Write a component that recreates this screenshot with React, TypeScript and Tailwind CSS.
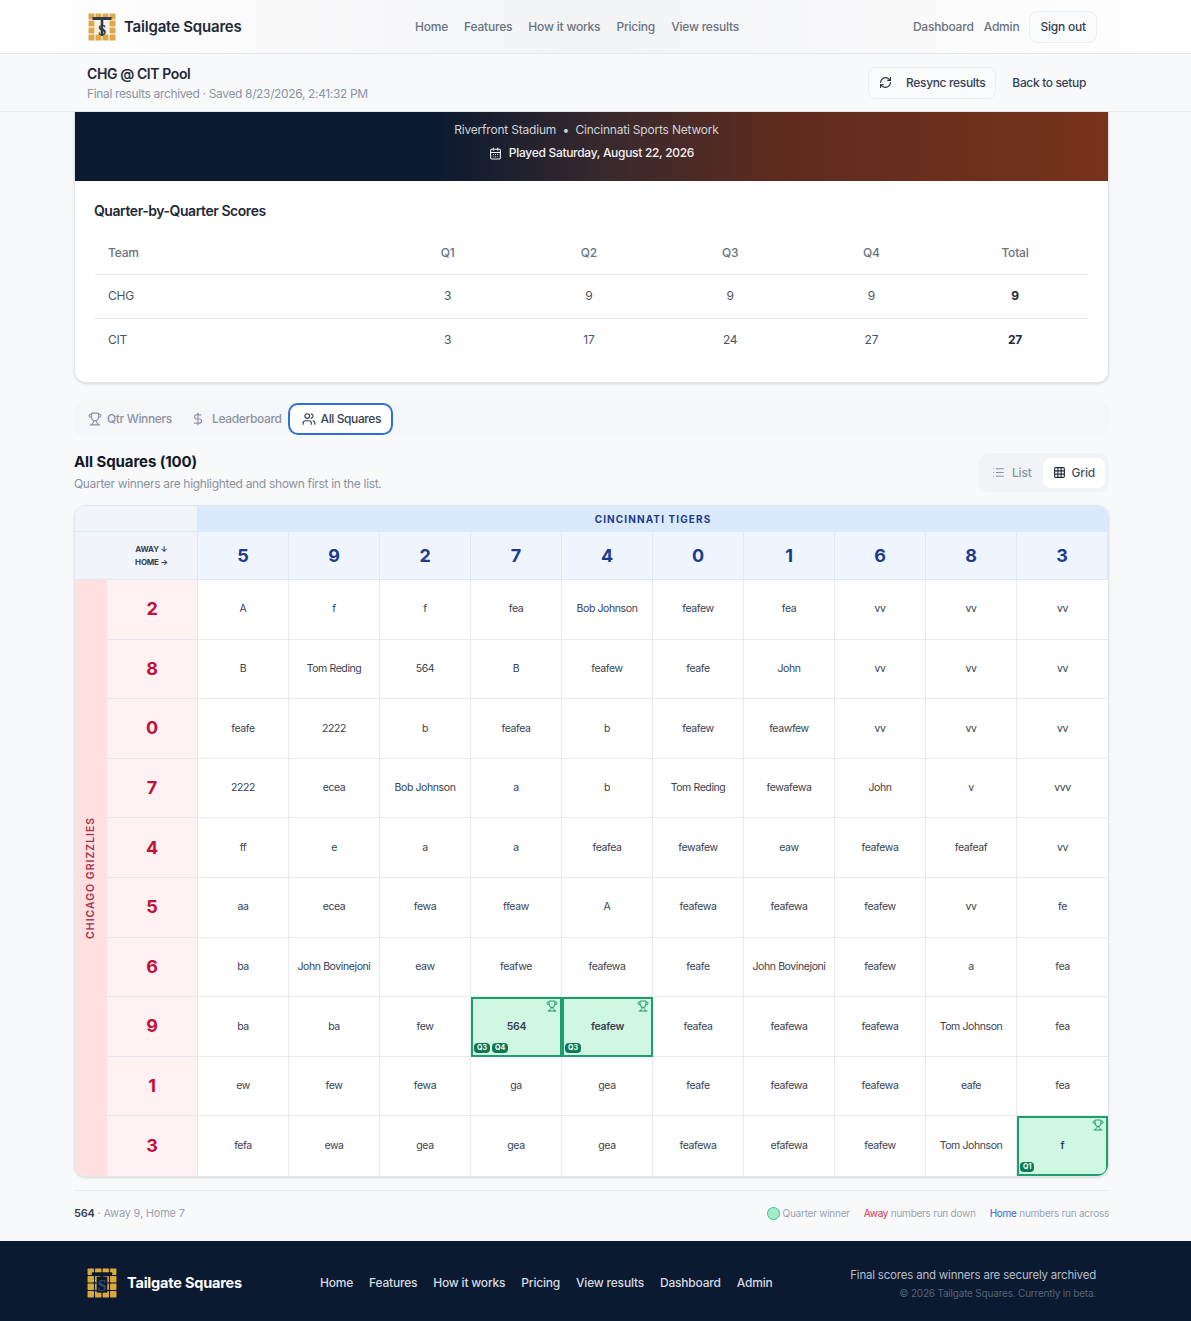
import React from 'react';
import { CalendarDays, DollarSign, Grid3x3, List, RefreshCw, Trophy, Users } from 'lucide-react';

const homeNumbers = [5, 9, 2, 7, 4, 0, 1, 6, 8, 3];

type Square = { name: string; quarters?: string[] };

const w = (name: string, ...quarters: string[]): Square => ({ name, quarters });

const board: { away: number; squares: (string | Square)[] }[] = [
  { away: 2, squares: ['A', 'f', 'f', 'fea', 'Bob Johnson', 'feafew', 'fea', 'vv', 'vv', 'vv'] },
  { away: 8, squares: ['B', 'Tom Reding', '564', 'B', 'feafew', 'feafe', 'John', 'vv', 'vv', 'vv'] },
  { away: 0, squares: ['feafe', '2222', 'b', 'feafea', 'b', 'feafew', 'feawfew', 'vv', 'vv', 'vv'] },
  { away: 7, squares: ['2222', 'ecea', 'Bob Johnson', 'a', 'b', 'Tom Reding', 'fewafewa', 'John', 'v', 'vvv'] },
  { away: 4, squares: ['ff', 'e', 'a', 'a', 'feafea', 'fewafew', 'eaw', 'feafewa', 'feafeaf', 'vv'] },
  { away: 5, squares: ['aa', 'ecea', 'fewa', 'ffeaw', 'A', 'feafewa', 'feafewa', 'feafew', 'vv', 'fe'] },
  { away: 6, squares: ['ba', 'John Bovinejoni', 'eaw', 'feafwe', 'feafewa', 'feafe', 'John Bovinejoni', 'feafew', 'a', 'fea'] },
  { away: 9, squares: ['ba', 'ba', 'few', w('564', 'Q3', 'Q4'), w('feafew', 'Q3'), 'feafea', 'feafewa', 'feafewa', 'Tom Johnson', 'fea'] },
  { away: 1, squares: ['ew', 'few', 'fewa', 'ga', 'gea', 'feafe', 'feafewa', 'feafewa', 'eafe', 'fea'] },
  { away: 3, squares: ['fefa', 'ewa', 'gea', 'gea', 'gea', 'feafewa', 'efafewa', 'feafew', 'Tom Johnson', w('f', 'Q1')] },
];

const scores = [
  { team: 'CHG', q: [3, 9, 9, 9], total: 9 },
  { team: 'CIT', q: [3, 17, 24, 27], total: 27 },
];

const navLinks = ['Home', 'Features', 'How it works', 'Pricing', 'View results'];
const footerLinks = [...navLinks, 'Dashboard', 'Admin'];

// gold tile grid with the T and S monogram on top
const Logo = ({ dark, size }: { dark?: boolean; size: number }) => {
  const tiles = [];
  for (let r = 0; r < 4; r++) {
    for (let c = 0; c < 4; c++) {
      tiles.push(<rect key={`${r}-${c}`} x={c * 7 + 0.5} y={r * 7 + 0.5} width="6" height="6" rx="0.6" fill={dark ? '#d9a93c' : '#dba94a'} />);
    }
  }
  const ink = dark ? '#0b1a30' : '#333a46';
  return (
    <svg width={size} height={size} viewBox="0 0 28 28" className="shrink-0">
      {tiles}
      {!dark && <rect x="7" y="7" width="14" height="14" fill="#f6f2e6" />}
      {dark && <rect x="9" y="8" width="10" height="15" fill="#0b1a30" />}
      <rect x="4.5" y="4" width="19" height="3" fill={ink} />
      <rect x="12.7" y="6" width="2.6" height="17" fill={ink} />
      <text x="14" y="21.5" textAnchor="middle" fontSize="15" fontFamily="'Liberation Serif', serif" fontWeight="700" fill={dark ? '#2f4a73' : '#333a46'}>S</text>
    </svg>
  );
};

const WinnerCell = ({ square, corner }: { square: Square; corner?: boolean }) => (
  <div className={`relative flex items-center justify-center border-2 border-[#1f9d6f] bg-[#cff7e1] text-[10.5px] font-semibold tracking-[-0.3px] text-[#374151] ${corner ? 'rounded-br-lg' : ''}`}>
    <Trophy size={12} strokeWidth={2} className="absolute right-[2px] top-[1px] text-[#1f9d6f]" />
    {square.name}
    <div className="absolute bottom-[2px] left-[1px] flex gap-[2px]">
      {square.quarters?.map((q) => (
        <span key={q} className="rounded-[4px] bg-[#0b7a52] px-[3px] text-[7px] font-bold leading-[10px] tracking-normal text-white">{q}</span>
      ))}
    </div>
  </div>
);

const SquaresGrid = () => (
  <div className="grid grid-cols-[32px_91px_repeat(10,minmax(0,1fr))] grid-rows-[26px_48px_repeat(10,minmax(0,1fr))] h-[672px] overflow-hidden rounded-xl border border-[#e2e6ec] bg-white shadow-sm">
    <div className="col-span-2 border-b border-r border-[#e2e8f0] bg-[#f1f4f8]" />
    <div className="col-span-10 flex items-center justify-center bg-[#dbe9fd] text-[10px] font-bold tracking-[1.1px] text-[#1e3a8a]">CINCINNATI TIGERS</div>

    <div className="col-span-2 flex flex-col items-center justify-center border-b border-r border-[#e2e8f0] bg-[#f1f4f8] pl-[31px] text-[8px] font-bold leading-[13px] text-[#374151]">
      <span>AWAY ↓</span>
      <span>HOME →</span>
    </div>
    {homeNumbers.map((n) => (
      <div key={n} className="flex items-center justify-center border-b border-r border-[#e2e8f0] bg-[#eef5fe] text-lg font-bold text-[#1e3a8a] last:border-r-0">{n}</div>
    ))}

    <div className="row-span-10 flex items-center justify-center bg-[#ffdfe0]">
      <span className="-rotate-90 whitespace-nowrap text-[10.5px] font-semibold tracking-[1px] text-[#a8324a]">CHICAGO GRIZZLIES</span>
    </div>
    {board.map((row, r) => (
      <React.Fragment key={row.away}>
        <div className={`flex items-center justify-center border-r border-[#e5e7eb] bg-[#fff0f1] text-lg font-bold text-[#be123c] ${r < 9 ? 'border-b' : ''}`}>{row.away}</div>
        {row.squares.map((square, c) =>
          typeof square === 'string' ? (
            <div key={c} className={`flex items-center justify-center whitespace-nowrap border-[#e8eaee] text-[10.5px] tracking-[-0.4px] text-[#374151] ${r < 9 ? 'border-b' : ''} ${c < 9 ? 'border-r' : ''}`}>{square}</div>
          ) : (
            <WinnerCell key={c} square={square} corner={r === 9 && c === 9} />
          ),
        )}
      </React.Fragment>
    ))}
  </div>
);

export default function App() {
  return (
    <div className="min-h-[1321px] bg-[#f8f9fb] font-['Inter',sans-serif] tracking-[-0.2px] text-[#1f2937]">
      <header className="flex h-[54px] items-center justify-between border-b border-[#e5e7eb] bg-gradient-to-r from-white via-[#f2f3f5] to-white pl-[88px] pr-[94px]">
        <div className="flex w-[327px] items-center gap-2">
          <Logo size={28} />
          <span className="mt-[2px] text-[15px] font-semibold text-[#1f2937]">Tailgate Squares</span>
        </div>
        <nav className="flex gap-4 text-xs font-medium text-[#6b7280]">
          {navLinks.map((l) => <span key={l}>{l}</span>)}
        </nav>
        <div className="ml-auto flex items-center gap-[10px] text-xs font-medium text-[#6b7280]">
          <span>Dashboard</span>
          <span>Admin</span>
          <span className="rounded-lg border border-[#eceef1] bg-[#f9fafb] px-[10px] py-[7px] text-[#374151]">Sign out</span>
        </div>
      </header>

      <div className="flex h-[58px] items-center justify-between border-b border-[#e8eaee] bg-[#f8f9fb] pl-[87px] pr-[105px]">
        <div>
          <div className="text-sm font-semibold leading-5 tracking-[-0.4px] text-[#1f2937]">CHG @ CIT Pool</div>
          <div className="mt-[2px] text-xs leading-4 tracking-[-0.35px] text-[#8b93a1]">Final results archived · Saved 8/23/2026, 2:41:32 PM</div>
        </div>
        <div className="flex items-center gap-4 text-xs font-medium tracking-[-0.35px] text-[#374151]">
          <span className="flex items-center gap-[14px] rounded-lg border border-[#eceef1] bg-[#f9fafb] px-[10px] py-[7px]">
            <RefreshCw size={13} className="text-[#1f2937]" />
            Resync results
          </span>
          <span>Back to setup</span>
        </div>
      </div>

      <main className="pl-[74px] pr-[82px]">
        <section className="overflow-hidden rounded-b-xl border border-t-0 border-[#e2e5ea] bg-white shadow-sm">
          <div className="flex h-[69px] flex-col items-center justify-center gap-[7px] bg-[linear-gradient(90deg,#0b1a30_35%,#3a292d_52%,#5e2b1f_68%,#78331b_100%)] pb-[10px] text-xs">
            <div className="pr-[10px] text-[#cfd3d8]">Riverfront Stadium&nbsp; •&nbsp; Cincinnati Sports Network</div>
            <div className="flex items-center gap-[7px] font-medium tracking-[-0.3px] text-[#f1f2f4]">
              <CalendarDays size={13} />
              Played Saturday, August 22, 2026
            </div>
          </div>
          <div className="h-[201px] px-5 pt-5">
            <h2 className="-ml-[1px] text-sm font-semibold leading-5 tracking-[-0.45px] text-[#1f2937]">Quarter-by-Quarter Scores</h2>
            <table className="mt-3 w-full table-fixed text-xs text-[#4b5563]">
              <thead>
                <tr className="h-[41px] border-b border-[#e5e7eb] text-[#6b7280]">
                  <th className="w-[282px] pl-[13px] text-left font-medium">Team</th>
                  <th className="font-medium">Q1</th>
                  <th className="font-medium">Q2</th>
                  <th className="font-medium">Q3</th>
                  <th className="font-medium">Q4</th>
                  <th className="w-[146px] font-medium">Total</th>
                </tr>
              </thead>
              <tbody>
                {scores.map((s, i) => (
                  <tr key={s.team} className={`h-[44px] ${i === 0 ? 'border-b border-[#e5e7eb]' : ''}`}>
                    <td className="pl-[13px]">{s.team}</td>
                    {s.q.map((v, j) => <td key={j} className="text-center">{v}</td>)}
                    <td className="text-center font-bold text-[#1f2937]">{s.total}</td>
                  </tr>
                ))}
              </tbody>
            </table>
          </div>
        </section>

        <div className="mt-5 flex h-8 items-center rounded-lg bg-[#f4f6f9] pl-[14px] text-xs font-medium tracking-[-0.35px] text-[#8b93a1]">
          <span className="flex items-center gap-[5px]"><Trophy size={14} />Qtr Winners</span>
          <span className="ml-[19px] flex items-center gap-[7px]"><DollarSign size={14} />Leaderboard</span>
          <span className="ml-[6px] flex h-8 items-center gap-[5px] rounded-[10px] border-2 border-[#2f6fd6] bg-white pl-3 pr-[10px] tracking-[-0.4px] text-[#374151]"><Users size={14} />All Squares</span>
        </div>

        <div className="mt-4 flex items-start justify-between">
          <div className="pt-[1px]">
            <h3 className="text-[15px] font-bold leading-5 tracking-[-0.1px] text-[#111827]">All Squares (100)</h3>
            <p className="mt-1 text-xs leading-4 tracking-[-0.33px] text-[#8b93a1]">Quarter winners are highlighted and shown first in the list.</p>
          </div>
          <div className="mt-[2px] flex h-[39px] items-center rounded-[10px] bg-[#f1f3f6] p-1 text-xs font-medium">
            <span className="flex items-center gap-[7px] pl-[9px] pr-[11px] text-[#8b93a1]"><List size={13} />List</span>
            <span className="flex h-[30px] items-center gap-[6px] rounded-lg bg-white px-[10px] text-[#4b5563]"><Grid3x3 size={13} className="text-[#1f2937]" />Grid</span>
          </div>
        </div>

        <div className="mt-[13px]">
          <SquaresGrid />
        </div>

        <div className="mt-[13px] flex h-[45px] items-center justify-between border-t border-[#e8eaee] text-[#9aa2ae]">
          <div className="text-[11px]"><span className="font-semibold text-[#374151]">564</span> · Away 9, Home 7</div>
          <div className="flex items-center gap-[14px] text-[10px] tracking-[-0.25px]">
            <span className="flex items-center gap-[3px]"><span className="h-[13px] w-[13px] rounded-full border border-[#34c48d] bg-[#a7ecc9]" />Quarter winner</span>
            <span><span className="text-[#d8324f]">Away</span> numbers run down</span>
            <span><span className="text-[#3b63c9]">Home</span> numbers run across</span>
          </div>
        </div>
      </main>

      <footer className="mt-[6px] flex h-[80px] items-center bg-[#0b1a30] pl-[87px] pr-[95px] pt-1">
        <Logo dark size={30} />
        <span className="ml-[10px] text-[14.5px] font-bold text-white">Tailgate Squares</span>
        <nav className="ml-[78px] flex gap-4 text-xs font-medium text-[#d5dae2]">
          {footerLinks.map((l) => <span key={l}>{l}</span>)}
        </nav>
        <div className="ml-auto text-right">
          <div className="text-[11.5px] leading-[18px] text-[#b6bfcc]">Final scores and winners are securely archived</div>
          <div className="mt-[1px] text-[10px] leading-4 text-[#55647c]">© 2026 Tailgate Squares. Currently in beta.</div>
        </div>
      </footer>
    </div>
  );
}
